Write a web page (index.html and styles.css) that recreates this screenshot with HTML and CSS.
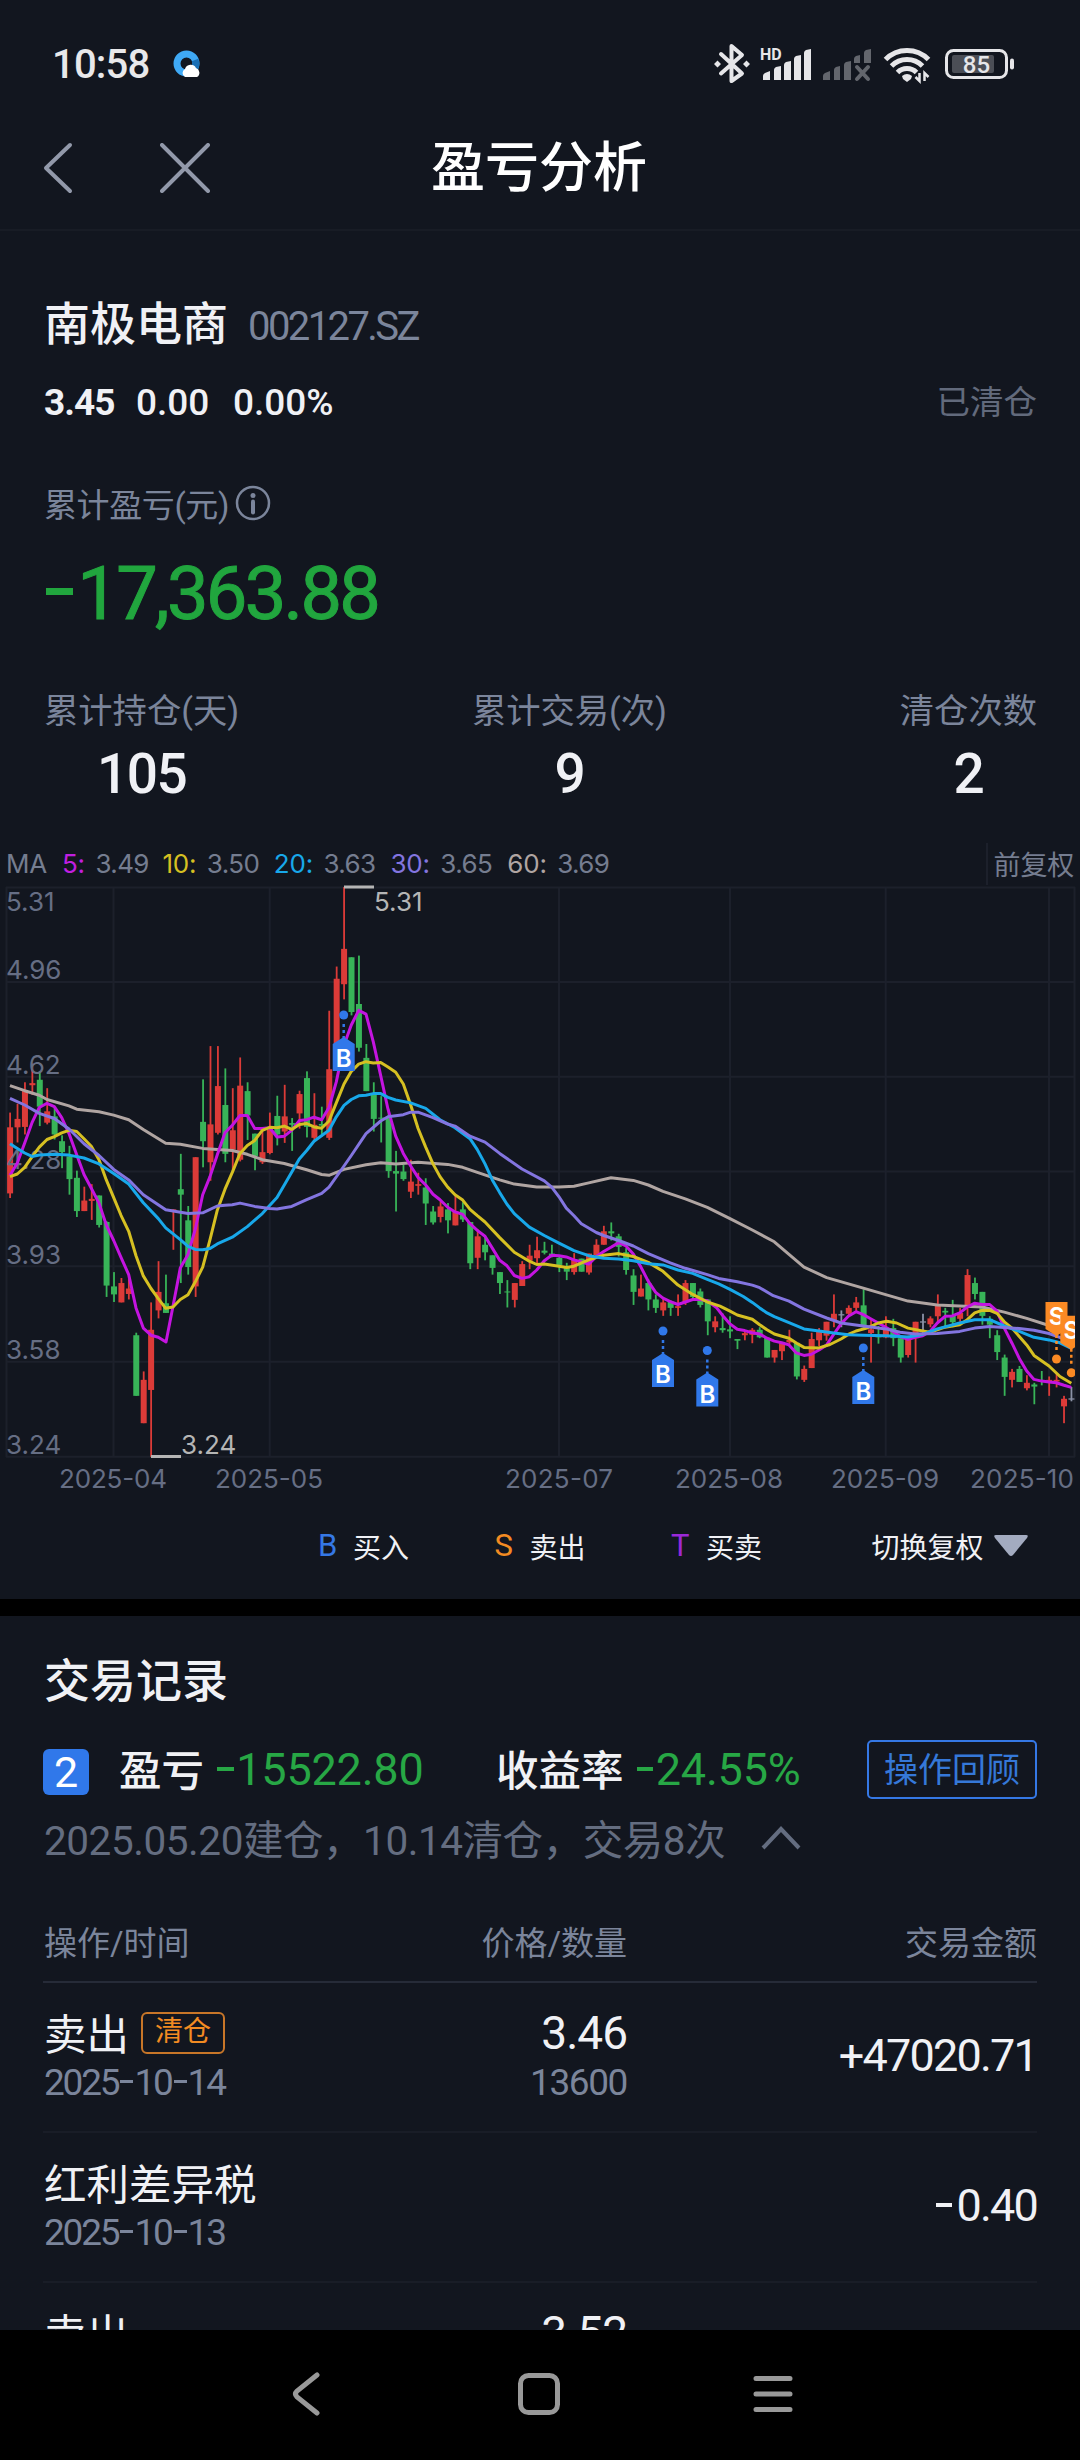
FILE: index.html
```html
<!DOCTYPE html>
<html lang="zh-CN">
<head>
  <meta charset="UTF-8">
  <meta name="viewport" content="width=device-width, initial-scale=1.0">
  <title>盈亏分析</title>
  <link rel="stylesheet" href="styles.css">
</head>
<body>
  <div class="phone">
    <div class="status-bar">
      <span class="time">10:58</span>
      <svg class="browser-icon" width="28" height="28" viewBox="0 0 28 28">
        <circle cx="13.5" cy="13.5" r="9.5" fill="none" stroke="#3fa9f5" stroke-width="7"/>
        <path d="M22 10 A9.5 9.5 0 0 1 20 20" fill="none" stroke="#1a6fb5" stroke-width="7"/>
        <path d="M12 27 a4.5 4.5 0 0 1 0 -8 a6 6 0 0 1 11 -1 a5 5 0 0 1 1 9z" fill="#fff"/>
      </svg>
      <svg class="status-icons" width="304" height="44" viewBox="713 42 304 44">
        <g fill="none" stroke="#e6e6e9" stroke-width="4" stroke-linejoin="round" stroke-linecap="round">
          <path d="M721 54 L742 73.5 L731.5 81 V46 L742 55 L721 73.5"/>
        </g>
        <g fill="#e6e6e9">
          <path d="M717.5 60.500l3.500 3.500-3.500 3.500-3.500-3.500zM746.500 60.500l3.500 3.500-3.500 3.500-3.500-3.500z"/>
          <text x="760" y="60" class="hd">HD</text>
          <path d="M763 80v-4q0-2 2-3l5-2v9zM774 80v-10q0-2 2-3l5-1v14zM784 80v-15q0-2 2-3l5-1v19zM794 80v-21q0-2 2-3l5-1v25zM804 80v-27q0-2 2-3l5-1v31z"/>
        </g>
        <g fill="#63666d">
          <path d="M823 80v-4q0-2 2-3l5-2v9zM834 80v-10q0-2 2-3l4-1v14zM844 80v-15q0-2 2-3l5-1v19zM854 63v-4q0-2 2-3l4-1v8zM864 63v-10q0-2 2-3l5-1v14z"/>
          <path d="M857 67l11 12M868 67l-11 12" stroke="#63666d" stroke-width="4" stroke-linecap="round"/>
        </g>
        <g fill="none" stroke="#e6e6e9" stroke-width="5">
          <path d="M885.500 59.500a30 30 0 0 1 43 0"/>
          <path d="M891.500 66a22 22 0 0 1 31 0"/>
          <path d="M897.500 72.500a13.500 13.500 0 0 1 19 0"/>
        </g>
        <path d="M902 76q5-4 10 0l-1 3-4 3-4-3z" fill="#e6e6e9"/>
        <path d="M919.500 73v8l-4-4M924.500 81v-8l4 4" fill="none" stroke="#e6e6e9" stroke-width="2.500"/>
        <rect x="946.500" y="50.500" width="60" height="27" rx="7" fill="none" stroke="#e6e6e9" stroke-width="3"/>
        <rect x="952" y="55" width="42" height="18" rx="2" fill="#4b4e56"/>
        <rect x="1010" y="58.500" width="4" height="11" rx="2" fill="#e6e6e9"/>
        <text x="976.500" y="73" class="battery-text">85</text>
      </svg>
    </div>

    <header class="title-bar">
      <svg class="back" width="30" height="52" viewBox="0 0 30 52"><path d="M27 3L3 26l24 23"/></svg>
      <svg class="close" width="50" height="50" viewBox="0 0 50 50"><path d="M2 2l46 46M48 2L2 48"/></svg>
      <h1>盈亏分析</h1>
    </header>

    <section class="summary">
      <div class="stock">
        <span class="stock-name">南极电商</span>
        <span class="stock-code">002127.SZ</span>
      </div>
      <div class="quote">
        <b>3.45</b><span class="change">0.00</span><span class="percent">0.00%</span>
        <span class="state">已清仓</span>
      </div>
      <div class="total-label">累计盈亏(元)
        <svg width="36" height="36" viewBox="0 0 36 36">
          <circle cx="18" cy="18" r="16" fill="none" stroke="#7b859b" stroke-width="2.500"/>
          <circle cx="18" cy="10.500" r="2.500" fill="#7b859b"/>
          <path d="M18 16.500v11" stroke="#7b859b" stroke-width="4" stroke-linecap="round"/>
        </svg>
      </div>
      <div class="total"><span class="dash"></span>17,363.88</div>
      <div class="stats">
        <div class="stat"><span>累计持仓(天)</span><strong>105</strong></div>
        <div class="stat"><span>累计交易(次)</span><strong>9</strong></div>
        <div class="stat"><span>清仓次数</span><strong>2</strong></div>
      </div>
    </section>

    <section class="chart">
      <div class="ma-row">
        <span class="ma-name">MA</span>
        <span class="ma5">5:</span><span class="ma-value">3.49</span>
        <span class="ma10">10:</span><span class="ma-value">3.50</span>
        <span class="ma20">20:</span><span class="ma-value">3.63</span>
        <span class="ma30">30:</span><span class="ma-value">3.65</span>
        <span class="ma60">60:</span><span class="ma-value">3.69</span>
        <span class="adjust">前复权</span>
      </div>
      <svg id="kline" width="1080" height="613" viewBox="0 0 1080 613"></svg>
      <div class="legend">
        <span class="key buy">B</span><span class="legend-text">买入</span>
        <span class="key sell">S</span><span class="legend-text">卖出</span>
        <span class="key both">T</span><span class="legend-text">买卖</span>
        <span class="switch">切换复权</span>
        <svg width="36" height="24" viewBox="0 0 36 24"><path d="M3 1h30q3 0 1 3L20 21q-2 2-4 0L2 4q-2-3 1-3z" fill="#a3abc0"/></svg>
      </div>
    </section>

    <section class="records">
      <h2>交易记录</h2>
      <div class="round">
        <span class="round-no">2</span>
        <span class="round-label">盈亏</span>
        <span class="green profit"><span class="dash"></span>15522.80</span>
        <span class="round-label rate-label">收益率</span>
        <span class="green rate"><span class="dash"></span>24.55%</span>
        <button>操作回顾</button>
      </div>
      <div class="round-info">
        <span>2025.05.20建仓，10.14清仓，交易8次</span>
        <svg width="40" height="24" viewBox="0 0 40 24"><path d="M2 22L20 3l18 19" fill="none" stroke="#646d80" stroke-width="4"/></svg>
      </div>
      <div class="row table-head">
        <span>操作/时间</span><span class="right">价格/数量</span><span class="right">交易金额</span>
      </div>
      <div class="row">
        <div>
          <div class="main">卖出<span class="tag">清仓</span></div>
          <div class="sub date">2025<i></i>10<i></i>14</div>
        </div>
        <div class="right">
          <div class="main num">3.46</div>
          <div class="sub">13600</div>
        </div>
        <div class="right amount">+47020.71</div>
      </div>
      <div class="row">
        <div>
          <div class="main">红利差异税</div>
          <div class="sub date">2025<i></i>10<i></i>13</div>
        </div>
        <div></div>
        <div class="right amount"><span class="dash"></span>0.40</div>
      </div>
      <div class="row">
        <div><div class="main">卖出</div></div>
        <div class="right"><div class="main num">3.52</div></div>
        <div></div>
      </div>
    </section>

    <nav class="nav-bar">
      <svg width="30" height="46" viewBox="0 0 30 46"><path d="M26 4L6 20q-3 3 0 6l20 16"/></svg>
      <svg width="46" height="46" viewBox="0 0 46 46"><rect x="4.500" y="4.500" width="37" height="37" rx="8"/></svg>
      <svg width="46" height="46" viewBox="0 0 46 46"><path d="M6 7.500h34M6 23h34M6 38.500h34"/></svg>
    </nav>
  </div>
  <script src="chart.js"></script>
</body>
</html>
```
FILE: styles.css
```css
* {
  box-sizing: border-box;
}

body {
  margin: 0;
  background: #000;
  color: #f0f1f5;
  font-family: Roboto, "Noto Sans CJK SC", sans-serif;
}

h1, h2 {
  margin: 0;
  font-weight: 500;
}

.phone {
  width: 1080px;
  height: 2460px;
  display: flex;
  flex-direction: column;
  background: #12161f;
  overflow: hidden;
}

/* status bar and title */
.status-bar {
  height: 104px;
  flex: none;
  display: flex;
  align-items: center;
  padding: 26px 63px 2px 52px;
}

.time {
  width: 121px;
  padding-top: 2px;
  font-size: 40px;
  line-height: 40px;
  font-weight: 500;
  letter-spacing: -0.8px;
  color: #e8e8ea;
}

.status-icons {
  margin-left: auto;
}

.hd {
  font: 700 16px Roboto, sans-serif;
}

.battery-text {
  font: 500 24px Roboto, sans-serif;
  text-anchor: middle;
  fill: #e6e6e9;
}

.title-bar {
  height: 127px;
  flex: none;
  display: flex;
  align-items: center;
  padding: 2px 0 0 43px;
  border-bottom: 2px solid #181c25;
}

.title-bar path {
  fill: none;
  stroke: #9299aa;
  stroke-width: 4;
  stroke-linecap: round;
  stroke-linejoin: round;
}

.close {
  margin-left: 87px;
}

.title-bar h1 {
  margin: 2px 0 0 221px;
  font-size: 54px;
  line-height: 60px;
  color: #fff;
}

/* summary */
.summary {
  flex: none;
  height: 609px;
  padding: 63px 43px 0 44px;
}

.stock {
  height: 60px;
  line-height: 60px;
  display: flex;
}

.stock-name {
  font-size: 46px;
  font-weight: 500;
}

.stock-code {
  margin: 3px 0 0 20px;
  font-size: 40px;
  letter-spacing: -2.6px;
  color: #7b859b;
}

.quote {
  margin-top: 29px;
  height: 40px;
  line-height: 40px;
  display: flex;
  font-size: 37px;
  font-weight: 500;
}

.quote b {
  width: 92px;
  letter-spacing: -1px;
}

.change {
  width: 97px;
}

.state {
  margin-left: auto;
  font-size: 33.500px;
  font-weight: 400;
  color: #626a7c;
}

.total-label {
  display: flex;
  align-items: center;
  margin-top: 60px;
  height: 40px;
  font-size: 33px;
  letter-spacing: -0.4px;
  color: #7b859b;
}

.total-label svg {
  margin-left: 6px;
}

.total {
  display: flex;
  align-items: center;
  margin-top: 30px;
  height: 80px;
  font-size: 74px;
  letter-spacing: -2.7px;
  -webkit-text-stroke: 1px #21a63e;
  color: #21a63e;
}

.dash {
  display: inline-block;
  flex: none;
  width: .36em;
  height: .085em;
  margin: 0 .06em .31em .03em;
  background: currentColor;
}

.total .dash {
  margin-bottom: .04em;
}

.stats {
  margin-top: 57px;
  display: flex;
  justify-content: space-between;
}

.stat {
  display: flex;
  flex-direction: column;
  align-items: center;
}

.stat span {
  font-size: 34.300px;
  line-height: 42px;
  color: #7b859b;
}

.stat strong {
  margin-top: 12px;
  font-size: 55px;
  line-height: 60px;
  font-weight: 500;
  letter-spacing: -1.500px;
}

/* k-line chart */
.chart {
  flex: none;
  height: 759px;
}

.ma-row {
  height: 47px;
  display: flex;
  align-items: center;
  padding: 0 6px 0;
  font-family: Inter, "Noto Sans CJK SC", sans-serif;
  font-size: 26px;
  letter-spacing: -0.2px;
  color: #757d90;
}

.ma-name {
  width: 56px;
}

.ma-value {
  width: 67px;
  margin-left: 10.500px;
  letter-spacing: -0.6px;
}

.ma5 {
  color: #c01fe0;
}

.ma10 {
  color: #d6c022;
}

.ma20 {
  color: #18a8ea;
}

.ma30 {
  color: #8375e0;
}

.ma60 {
  color: #b0a5a2;
}

.adjust {
  height: 42px;
  margin-left: auto;
  padding-left: 6px;
  border-left: 2px solid #1c202b;
  line-height: 46px;
  font-size: 27px;
}

#kline {
  display: block;
  overflow: visible;
}

#kline text {
  font-family: Inter, sans-serif;
  font-size: 26px;
  fill: #666e84;
}

#kline .extreme {
  fill: #b5b5b5;
}

#kline .pin-text {
  font-size: 24px;
  font-weight: 600;
  text-anchor: middle;
  fill: #fff;
}

.grid {
  stroke: #1c202b;
  stroke-width: 2;
}

.ma-line {
  fill: none;
  stroke-width: 3;
  stroke-linejoin: round;
}

.legend {
  display: flex;
  align-items: center;
  height: 91px;
  padding-left: 318px;
  font-size: 28px;
}

.key {
  width: 35px;
  font-size: 31px;
}

.buy {
  color: #3578e5;
}

.sell {
  color: #f28b22;
}

.both {
  color: #9a28d8;
}

.legend-text {
  width: 141.500px;
}

.switch {
  margin: 0 9px 0 24px;
}

/* trade records */
.records {
  flex: none;
  height: 731px;
  padding: 0 43px;
  border-top: 17px solid #000;
  overflow: hidden;
}

.records h2 {
  height: 60px;
  margin: 35px 0 0 1px;
  line-height: 60px;
  font-size: 46px;
}

.round {
  height: 60px;
  margin-top: 28px;
  display: flex;
  align-items: center;
  font-size: 45px;
}

.round-no {
  width: 46px;
  height: 46px;
  margin-top: 5px;
  border-radius: 6px;
  background: #3078ea;
  color: #fff;
  font-size: 43px;
  line-height: 46px;
  text-align: center;
}

.round-label {
  margin: -3px 12px 0 30px;
  font-size: 42.500px;
  font-weight: 500;
}

.rate-label {
  margin: -3px 12px 0 -1px;
}

.profit {
  width: 281px;
}

.profit, .rate {
  letter-spacing: -0.2px;
}

.green {
  color: #27a745;
}

.round button {
  width: 170px;
  height: 59px;
  margin-left: auto;
  padding: 0 0 4px;
  border: 2px solid #3578e5;
  border-radius: 5px;
  background: none;
  color: #3578d8;
  font: inherit;
  font-size: 34px;
}

.round-info {
  display: flex;
  align-items: center;
  margin: 10px 0 4px 1px;
  height: 56px;
  font-size: 40.500px;
  letter-spacing: -0.45px;
  color: #646d80;
}

.round-info svg {
  margin: 2px 0 0 36px;
}

.row {
  display: grid;
  grid-template-columns: 300px 283px 1fr;
  height: 150px;
  padding: 22px 0 0 1px;
  border-bottom: 2px solid #191d27;
}

.right {
  text-align: right;
}

.table-head {
  height: 114px;
  padding-top: 51px;
  border-color: #262b38;
  font-size: 33px;
  line-height: 48px;
  color: #7b859b;
}

.main {
  display: flex;
  align-items: center;
  height: 52px;
  font-size: 42.500px;
}

.num {
  padding-top: 3px;
  justify-content: flex-end;
  font-size: 46px;
  letter-spacing: -1px;
}

.tag {
  height: 42px;
  margin: 4px 0 0 12px;
  padding: 0 12px;
  border: 2px solid #c87628;
  border-radius: 6px;
  color: #f28b22;
  font-size: 28px;
  line-height: 36px;
}

.sub {
  height: 46px;
  margin-top: 3px;
  font-size: 37px;
  line-height: 46px;
  letter-spacing: -1.4px;
  color: #7b859b;
}

.date {
  letter-spacing: -2.2px;
}

.sub i {
  display: inline-block;
  width: 13px;
  height: 3px;
  margin: 0 1px 12px 2px;
  background: currentColor;
}

.amount {
  padding-top: 24px;
  font-size: 45px;
  line-height: 54px;
  letter-spacing: -1.8px;
}

.amount .dash {
  margin-right: .1em;
}

/* android navigation */
.nav-bar {
  flex: 1;
  display: flex;
  align-items: center;
  padding: 0 0 2px 291px;
  background: #000;
}

.nav-bar svg {
  fill: none;
  stroke: #999;
  stroke-width: 5;
  stroke-linecap: round;
}

.nav-bar svg + svg {
  margin-left: 195px;
}

.nav-bar svg:last-child {
  margin-left: 188px;
}
```
FILE: chart.js
```js
// each candle: color, high, body top, body bottom, low (chart units)
const candles = `r 648 683 840 851,r 627 663 683 719,r 576 596 682 700,r 530 578 583 606,g 550 570 634 680,r 590 645 672 676,
g 636 657 700 712,g 702 716 742 780,g 727 752 806 843,g 786 803 882 896,r 824 857 882 882,r 818 853 858 903,
g 845 845 915 921,g 906 908 1059 1086,g 1027 1061 1080 1098,r 1041 1053 1099 1099,r 1032 1066 1079 1092,g 1171 1177 1321 1321,
r 1263 1283 1386 1386,r 1099 1164 1307 1466,r 1001 1074 1118 1137,g 1033 1101 1124 1124,r 878 878 878 974,g 746 830 843 1053,
g 870 904 1015 1033,r 754 754 1061 1086,g 569 670 716 778,r 490 676 766 810,r 490 585 696 700,g 543 630 746 766,
r 590 690 736 785,r 517 584 760 764,g 576 597 655 713,g 698 698 751 785,r 690 742 766 770,r 648 688 744 747,
g 608 656 700 726,r 582 657 693 720,g 661 673 677 739,r 596 604 650 686,g 550 566 682 707,r 602 677 708 713,
g 634 675 679 705,r 406 545 708 713,r 301 330 500 540,r 112 259 343 379,g 279 279 409 417,g 275 390 494 503,
g 485 518 597 597,g 576 603 663 693,g 609 660 662 719,g 640 660 787 803,g 739 787 793 883,g 772 788 806 810,
r 760 812 836 851,r 791 818 822 843,g 804 826 864 915,g 870 883 909 914,r 857 871 896 909,g 863 878 904 935,
r 844 882 916 916,g 861 878 902 908,g 908 908 1006 1020,r 925 942 993 1020,g 942 962 980 999,g 987 987 1017 1033,
g 1027 1027 1053 1079,g 1046 1073 1075 1111,r 1053 1053 1093 1111,r 1001 1008 1060 1060,r 962 988 1000 1020,r 943 975 994 1006,
g 955 976 981 985,g 962 983 988 992,g 987 993 1010 1027,g 1005 1013 1026 1046,r 982 997 1027 1033,g 995 995 1026 1026,
r 983 983 1028 1033,r 949 962 987 991,r 917 930 962 962,g 909 930 935 952,g 936 942 967 990,g 970 980 1022 1033,
g 1020 1035 1074 1105,r 1033 1066 1085 1085,g 1044 1053 1092 1118,g 1080 1092 1112 1124,r 1090 1099 1118 1131,g 1094 1097 1112 1131,
r 1080 1108 1112 1131,r 1046 1053 1099 1105,g 1053 1053 1086 1090,g 1066 1073 1105 1111,g 1092 1092 1144 1177,r 1132 1144 1158 1170,
g 1125 1160 1165 1171,g 1132 1163 1168 1184,g 1186 1186 1190 1210,r 1165 1172 1177 1189,r 1160 1164 1176 1196,g 1158 1164 1182 1184,
g 1183 1183 1230 1230,r 1212 1212 1230 1242,r 1196 1196 1215 1236,r 1164 1188 1194 1200,g 1195 1195 1275 1282,r 1249 1257 1283 1288,
r 1171 1186 1255 1255,r 1160 1166 1189 1203,r 1145 1145 1178 1190,r 1080 1126 1143 1158,w 1118 1127 1130 1158,r 1106 1112 1126 1132,
r 1086 1099 1112 1119,g 1068 1106 1158 1160,r 1138 1163 1172 1242,g 1155 1176 1182 1197,r 1132 1160 1182 1184,g 1138 1160 1184 1203,
g 1180 1184 1230 1242,r 1178 1185 1224 1230,r 1145 1145 1184 1242,w 1126 1144 1147 1175,r 1132 1137 1151 1158,r 1080 1106 1132 1145,
g 1112 1119 1123 1158,g 1093 1130 1146 1158,r 1112 1124 1138 1145,r 1020 1034 1106 1132,g 1040 1053 1079 1092,g 1074 1074 1131 1152,
g 1132 1138 1152 1184,g 1165 1177 1217 1236,g 1223 1230 1276 1321,r 1257 1264 1283 1301,g 1250 1257 1288 1288,r 1272 1290 1303 1308,
g 1290 1294 1299 1341,g 1262 1285 1288 1296,r 1275 1283 1288 1321,r 1268 1283 1287 1301,r 1321 1328 1346 1386,w 1300 1327 1330 1334`;

const lines = {
  '#b0a5a2': '30,584 74,596 118,607 141,617 207,632 230,640 297,646 341,654 386,665 430,688 497,721 541,723 608,733 697,738 742,747 787,760 853,769 920,784 965,795 987,797 1032,783 1098,772 1142,767 1187,770 1254,766 1343,771 1388,778 1432,790 1499,808 1543,818 1610,825 1677,825 1722,823 1766,815 1833,803 1900,809 1945,820 1989,835 2056,853 2122,873 2190,900 2257,927 2323,955 2367,985 2412,1015 2480,1040 2590,1065 2724,1096 2812,1105 2946,1110 3013,1122 3080,1137 3140,1152 3214,1172',
  '#c414e0': '30,797 52,768 74,720 96,672 118,636 141,626 163,634 185,660 207,698 230,748 252,795 274,828 297,863 319,915 341,952 363,992 386,1033 408,1112 430,1160 453,1177 475,1182 498,1193 519,1108 541,1017 564,985 586,925 608,843 630,800 652,748 675,696 697,678 720,655 742,655 764,686 787,686 809,684 831,706 853,704 875,690 898,667 920,665 942,659 965,665 987,636 1009,575 1031,490 1054,440 1076,405 1098,414 1120,480 1142,560 1164,640 1187,704 1210,745 1232,775 1254,802 1277,820 1299,842 1320,855 1343,873 1365,884 1388,890 1410,912 1432,928 1455,942 1477,970 1499,999 1521,1012 1543,1035 1566,1042 1588,1038 1610,1022 1633,1000 1655,987 1677,988 1699,991 1722,998 1744,1003 1766,1008 1789,990 1811,978 1833,968 1856,957 1878,965 1900,984 1922,1014 1945,1049 1967,1075 1989,1089 2011,1097 2034,1104 2056,1098 2078,1092 2100,1092 2122,1095 2150,1112 2170,1132 2190,1150 2212,1163 2234,1166 2256,1171 2279,1174 2301,1184 2323,1191 2345,1195 2367,1200 2389,1219 2412,1225 2434,1222 2457,1212 2480,1200 2501,1175 2523,1150 2545,1132 2568,1121 2590,1128 2612,1138 2635,1148 2657,1158 2679,1168 2701,1180 2724,1187 2746,1182 2768,1178 2790,1168 2812,1148 2835,1132 2857,1131 2879,1124 2902,1110 2924,1101 2946,1104 2969,1104 2991,1120 3013,1160 3036,1196 3058,1232 3080,1262 3102,1282 3125,1286 3147,1288 3169,1290 3192,1296 3214,1301',
  '#d6c022': '30,800 52,794 74,778 96,753 118,730 141,712 163,705 185,696 207,690 230,693 252,710 274,728 297,760 319,808 341,850 363,892 386,930 408,988 430,1036 453,1066 475,1090 497,1113 519,1110 541,1092 564,1081 586,1050 608,1015 630,950 652,880 675,830 697,790 720,745 742,726 764,714 787,690 809,683 831,684 853,680 875,688 898,676 920,674 942,682 965,685 987,668 1009,625 1032,580 1054,550 1076,533 1098,527 1120,530 1142,529 1164,540 1187,552 1210,580 1232,630 1254,685 1277,730 1299,770 1320,800 1343,825 1365,843 1388,856 1410,878 1432,893 1455,908 1499,945 1543,980 1588,1001 1610,1009 1633,1008 1677,1013 1700,1016 1722,1013 1766,998 1811,987 1856,983 1900,990 1945,1004 1989,1025 2034,1058 2078,1080 2122,1098 2160,1108 2190,1120 2212,1129 2257,1139 2279,1152 2301,1164 2323,1174 2367,1184 2390,1196 2412,1206 2457,1207 2490,1199 2523,1186 2545,1175 2568,1167 2600,1160 2635,1148 2660,1144 2690,1148 2724,1160 2768,1167 2790,1170 2835,1158 2879,1152 2902,1140 2924,1124 2946,1118 2969,1118 2991,1125 3013,1145 3036,1160 3058,1180 3080,1200 3102,1225 3147,1250 3180,1275 3214,1291',
  '#18a8ea': '30,722 52,733 74,744 96,752 118,749 163,747 207,749 252,756 297,770 341,793 386,818 430,862 475,900 497,922 541,950 564,966 586,973 608,974 630,971 652,960 697,944 742,919 787,888 831,850 853,820 898,758 920,738 942,716 987,690 1009,658 1032,631 1054,617 1076,608 1098,607 1120,603 1142,603 1164,612 1187,618 1232,625 1277,638 1320,665 1365,684 1410,710 1432,736 1455,770 1477,808 1499,838 1521,866 1543,888 1588,920 1633,940 1677,958 1722,976 1766,988 1811,994 1856,996 1900,1000 1945,1007 1989,1010 2034,1022 2078,1030 2122,1044 2156,1055 2190,1068 2230,1085 2257,1099 2279,1112 2301,1124 2323,1133 2367,1147 2412,1162 2457,1167 2501,1172 2545,1176 2590,1177 2657,1178 2700,1180 2724,1181 2768,1175 2812,1162 2879,1148 2924,1140 2969,1140 3013,1155 3058,1168 3102,1182 3147,1188 3180,1195 3214,1208',
  '#8375e0': '30,614 74,630 118,650 163,662 207,687 252,722 297,750 341,783 386,808 430,843 497,879 564,888 608,886 652,870 675,868 697,867 720,863 764,871 809,876 831,877 875,871 920,855 965,840 987,825 1032,775 1054,750 1098,698 1142,668 1164,658 1210,653 1232,647 1254,647 1299,660 1343,675 1365,680 1410,704 1455,718 1499,745 1566,782 1633,810 1655,825 1677,848 1699,875 1722,893 1744,912 1789,933 1811,940 1856,952 1900,965 1945,983 2011,1005 2056,1018 2122,1033 2156,1042 2212,1050 2257,1058 2279,1064 2320,1083 2367,1096 2412,1115 2480,1136 2523,1148 2590,1155 2657,1162 2700,1170 2746,1174 2812,1173 2879,1168 2924,1160 2969,1156 3058,1161 3102,1165 3147,1173 3190,1185 3214,1195'
};

const colors = { r: '#dc3b38', g: '#38b458', w: '#8b92a6' };
const y = v => (v - 112) / 2.376;
let out = '';

// grid
[113, 338, 563, 788, 1013, 1240, 1466].forEach(v => {
  out += `<path class="grid" d="M6 ${y(v)}H1075"/>`;
});
[6.5, 113.5, 269.7, 559, 730, 885.7, 1049, 1074.5].forEach(x => {
  out += `<path class="grid" d="M${x} 0V570"/>`;
});

// candles
candles.split(',').forEach((row, i) => {
  const [c, high, top, bottom, low] = row.trim().split(' ');
  const x = 10 + i * 7.422;
  const h = Math.max(y(bottom) - y(top), 1);
  out += `<rect x="${x - .8}" y="${y(high)}" width="1.8" height="${y(low) - y(high)}" fill="${colors[c]}"/>`;
  out += `<rect x="${x - 2.9}" y="${y(top)}" width="6" height="${h}" fill="${colors[c]}"/>`;
});

// price labels
[['5.31', 24], ['4.96', 92], ['4.62', 187], ['4.28', 282], ['3.93', 376.5], ['3.58', 472], ['3.24', 567]].forEach(([t, v]) => {
  out += `<text x="6" y="${v}">${t}</text>`;
});

for (const color in lines) {
  const pts = lines[color].split(' ').map(p => {
    const [px, py] = p.split(',');
    return (px / 3).toFixed(1) + ',' + y(py).toFixed(1);
  });
  out += `<polyline class="ma-line" stroke="${color}" points="${pts.join(' ')}"/>`;
}

// highest and lowest price
out += '<path d="M344 0H374M151 569.500H181" stroke="#b5b5b5" stroke-width="3"/>';
out += '<text class="extreme" x="374" y="24">5.31</text><text class="extreme" x="181" y="567">3.24</text>';

// trade marks
[[343.7, 128], [663, 444], [707.3, 463.5], [863.3, 461]].forEach(([x, v]) => {
  out += `<circle cx="${x}" cy="${v}" r="4.5" fill="#3078ea"/>
    <path d="M${x} ${v + 9}v14" stroke="#3078ea" stroke-width="2.500" stroke-dasharray="3 3"/>
    <path d="M${x} ${v + 22}l11 7v27h-22v-27z" fill="#3078ea"/>
    <text class="pin-text" x="${x}" y="${v + 52}">B</text>`;
});
out += '<clipPath id="plot"><rect width="1075" height="570"/></clipPath><g clip-path="url(#plot)">';
[[1056.5, 472], [1071.3, 485.7]].forEach(([x, v]) => {
  out += `<circle cx="${x}" cy="${v}" r="4.5" fill="#fb8a24"/>
    <path d="M${x} ${v - 9}v-15" stroke="#fb8a24" stroke-width="2.500" stroke-dasharray="3 3"/>
    <path d="M${x} ${v - 23}l-11 -7v-27h22v27z" fill="#fb8a24"/>
    <text class="pin-text" x="${x}" y="${v - 34}">S</text>`;
});
out += '</g>';

// months
[['2025-04', 59], ['2025-05', 215], ['2025-07', 505], ['2025-08', 675], ['2025-09', 831], ['2025-10', 970]].forEach(([t, x]) => {
  out += `<text x="${x}" y="600.5" textLength="${x === 970 ? 104 : 108}">${t}</text>`;
});

document.getElementById('kline').innerHTML = out;
```
